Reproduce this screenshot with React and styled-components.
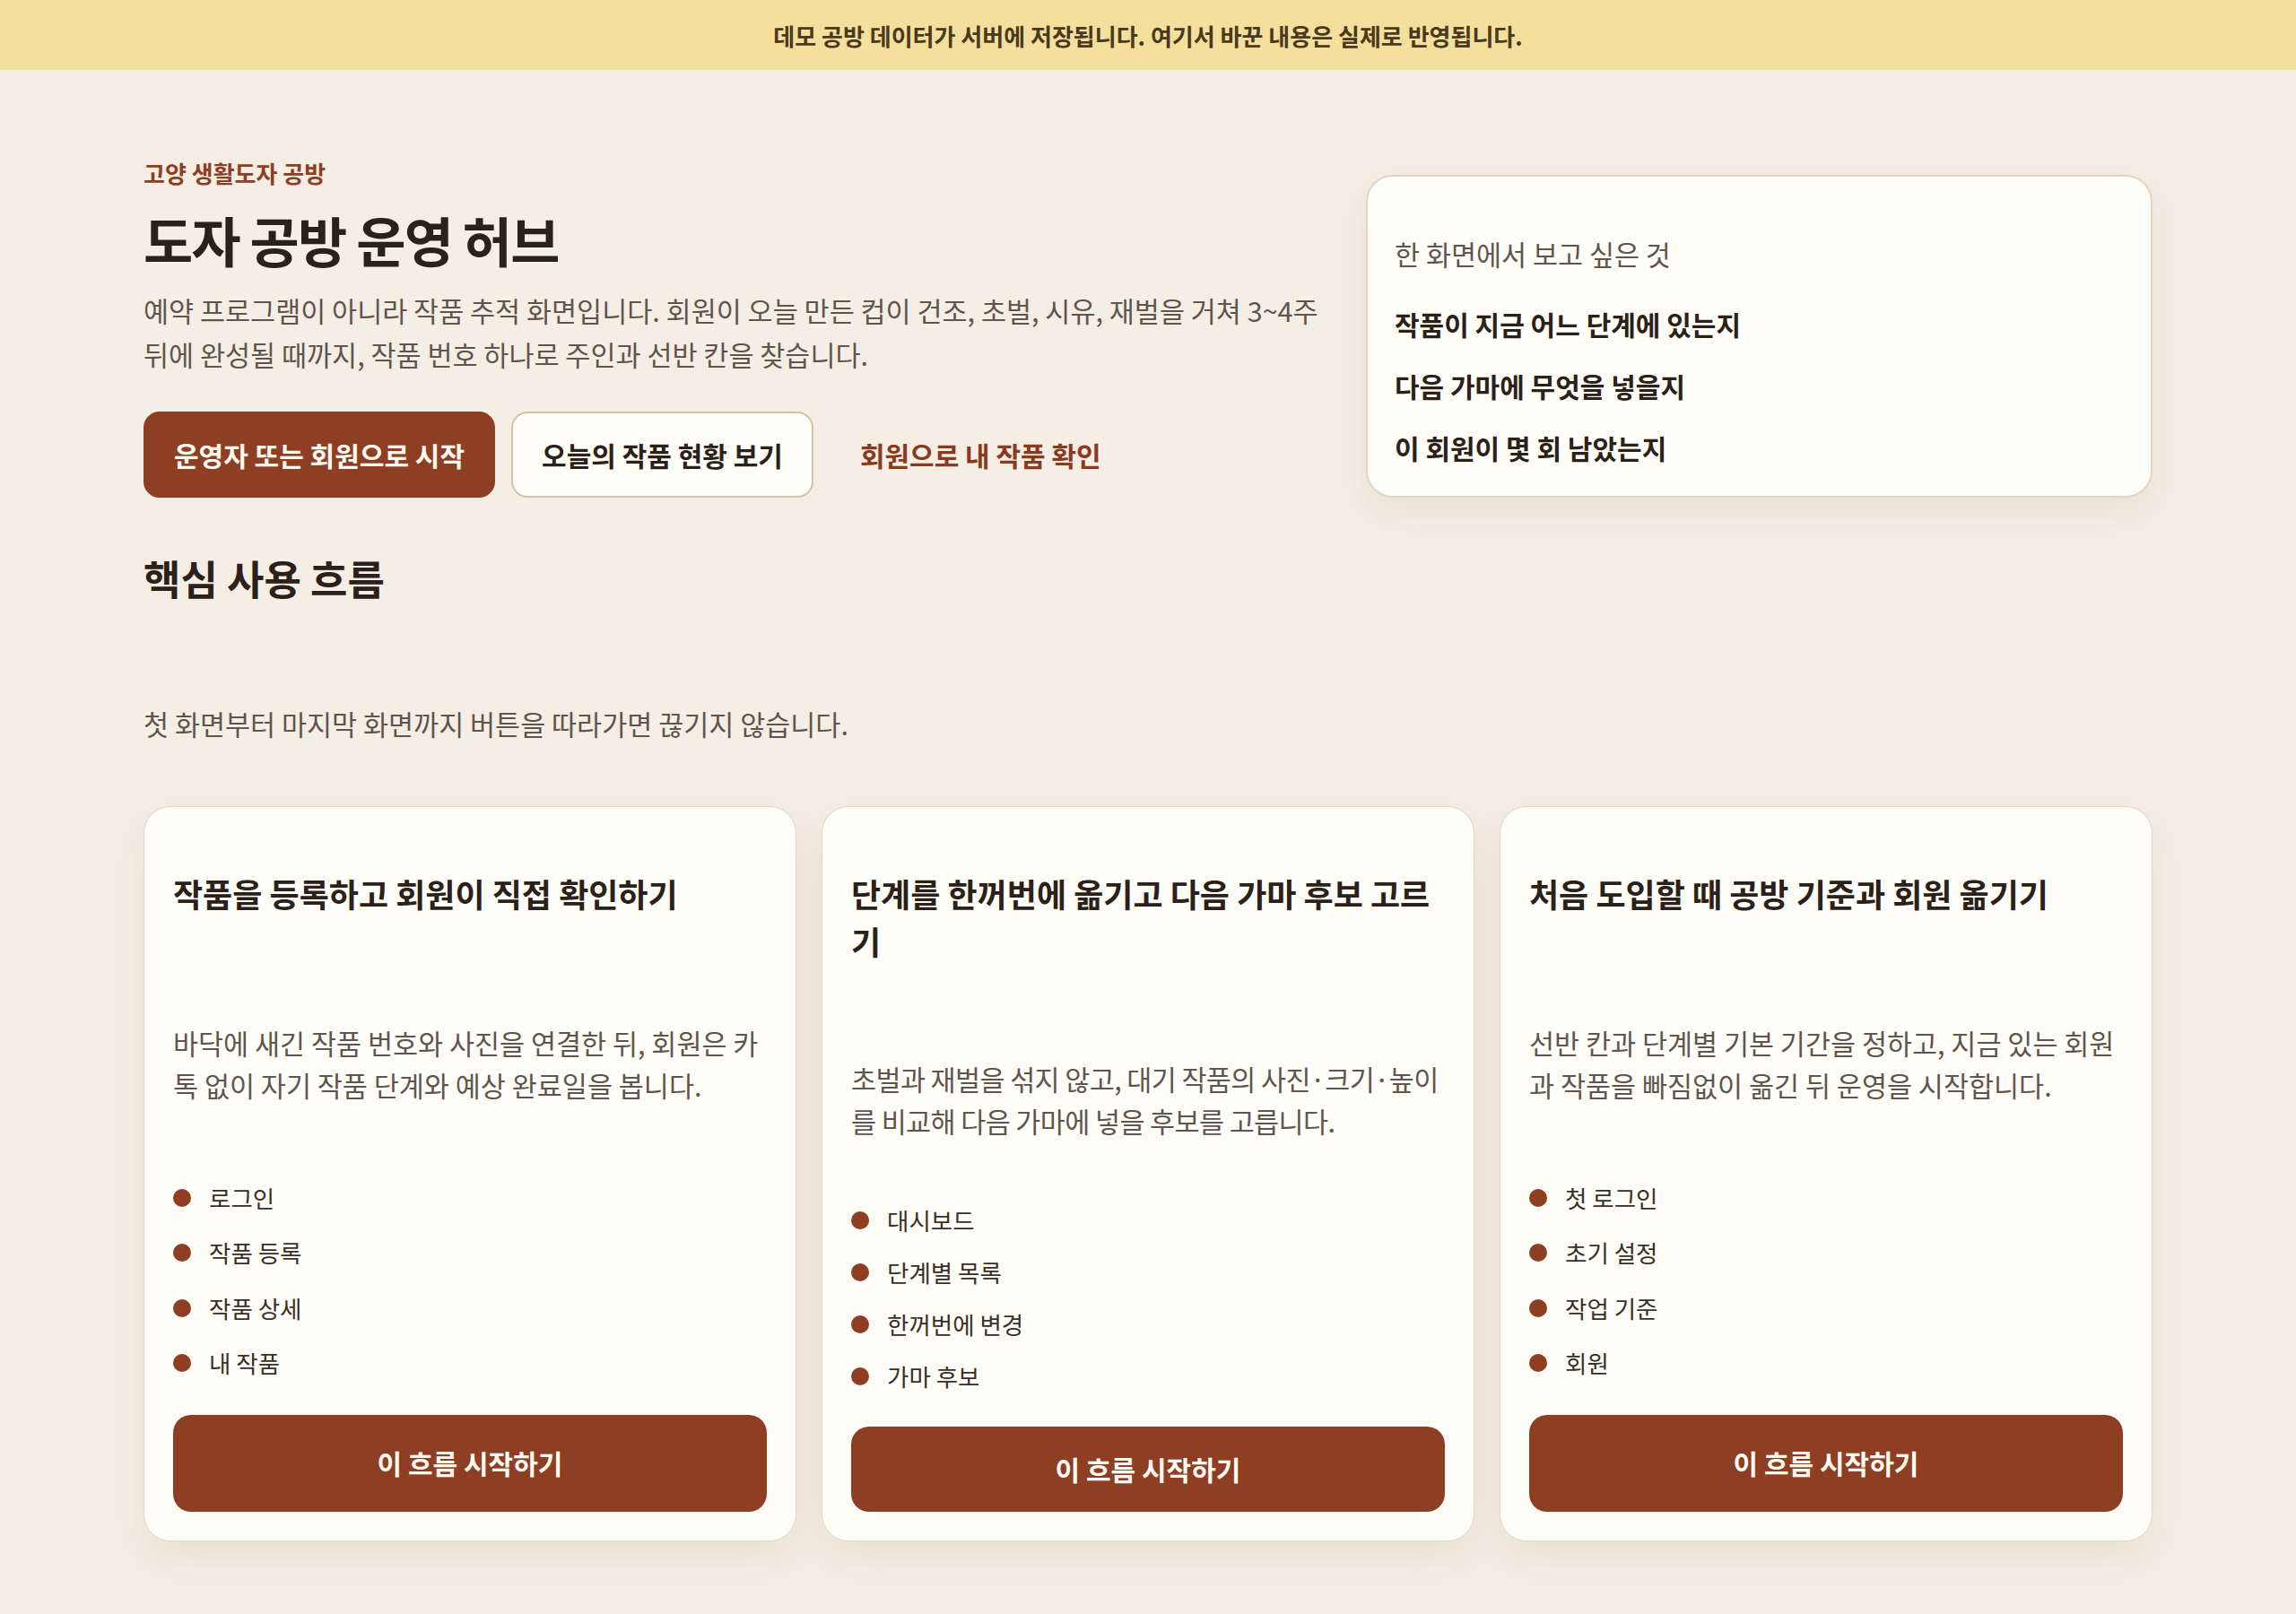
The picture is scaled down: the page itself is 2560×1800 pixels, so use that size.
import styled, { createGlobalStyle } from "styled-components";

const GlobalStyle = createGlobalStyle`
  * {
    box-sizing: border-box;
  }
  body {
    margin: 0;
    background: #f5eee5;
    color: #2b2119;
    font-family: "Noto Sans CJK KR", "Noto Sans", sans-serif;
  }
`;

const Banner = styled.div`
  height: 78px;
  display: flex;
  align-items: center;
  justify-content: center;
  background: #f4df9c;
  color: #4a3a1d;
  font-size: 26px;
  font-weight: 700;
`;

const Page = styled.main`
  padding: 98px 160px 80px;
`;

const Hero = styled.section`
  display: grid;
  grid-template-columns: minmax(0, 1fr) 877px;
  column-gap: 24px;
  align-items: end;
`;

const HeroText = styled.div`
  display: flex;
  flex-direction: column;
`;

const Eyebrow = styled.p`
  margin: 0;
  font-size: 26px;
  line-height: 34px;
  font-weight: 700;
  color: #8e3e22;
`;

const Title = styled.h1`
  margin: 21px 0 0;
  font-size: 60px;
  line-height: 72px;
  font-weight: 700;
  letter-spacing: -0.03em;
  color: #2b2119;
`;

const Lead = styled.p`
  margin: 19px 0 0;
  font-size: 30.5px;
  line-height: 49px;
  color: #5f554d;
`;

const ButtonRow = styled.div`
  display: flex;
  gap: 18px;
  margin-top: 39px;
`;

const looks = {
  primary: "background: #8e3e22; color: #fffaf2; border-color: #8e3e22;",
  secondary: "background: #fffdf8; color: #2b2119; border-color: #d6c2a4;",
  ghost: "background: transparent; color: #8a3a1e; border-color: transparent;"
};

const HeroButton = styled.button`
  padding: 22px 32px;
  border: 2px solid;
  border-radius: 18px;
  font-family: inherit;
  font-size: 30px;
  line-height: 48px;
  font-weight: 700;
  cursor: pointer;
  ${props => looks[props.$look]}
`;

const NoteCard = styled.aside`
  background: #fffdf8;
  border: 2px solid #e3d5c1;
  border-radius: 30px;
  padding: 64px 30px 31px;
  box-shadow: 0 16px 40px rgba(96, 62, 30, 0.07);
`;

const NoteLabel = styled.p`
  margin: 0;
  font-size: 30.5px;
  line-height: 45px;
  color: #5f554d;
`;

const NoteList = styled.ul`
  list-style: none;
  margin: 33px 0 0;
  padding: 0;
  display: grid;
  gap: 24px;
`;

const NoteItem = styled.li`
  font-size: 30px;
  line-height: 45px;
  font-weight: 700;
  color: #2b2119;
`;

const SectionTitle = styled.h2`
  margin: 61px 0 0;
  font-size: 45px;
  line-height: 58px;
  font-weight: 700;
  color: #2b2119;
`;

const SectionLead = styled.p`
  margin: 109px 0 0;
  font-size: 30.5px;
  line-height: 48px;
  color: #5f554d;
`;

const FlowGrid = styled.div`
  display: grid;
  grid-template-columns: repeat(3, minmax(0, 1fr));
  gap: 28px;
  margin-top: 68px;
`;

const FlowCard = styled.article`
  display: grid;
  background: #fffdf8;
  border: 1px solid #e2d5c2;
  border-radius: 30px;
  padding: 32px;
  box-shadow: 0 18px 44px rgba(96, 62, 30, 0.08);
`;

const FlowTitle = styled.h3`
  margin: 38px 0 0;
  font-size: 36px;
  line-height: 53px;
  font-weight: 700;
  color: #2b2119;
`;

const FlowText = styled.p`
  margin: 104px 0 0;
  font-size: 30.5px;
  line-height: 47px;
  letter-spacing: ${props => (props.$tight ? "-0.02em" : "0")};
  color: #5f554d;
`;

const StepList = styled.ul`
  list-style: none;
  margin: 68px 0 0;
  padding: 0;
  display: grid;
  gap: 20px;
`;

const Step = styled.li`
  display: flex;
  align-items: center;
  gap: 20px;
  font-size: 26.5px;
  line-height: 38px;
  color: #3a2f27;

  &::before {
    content: "";
    width: 20px;
    height: 20px;
    border-radius: 50%;
    background: #8e3e22;
    flex-shrink: 0;
  }
`;

const FlowButton = styled.button`
  margin-top: 37px;
  display: flex;
  align-items: center;
  justify-content: center;
  width: 100%;
  padding: 25px 24px;
  border: none;
  border-radius: 20px;
  background: #8e3e22;
  color: #fffaf2;
  font-family: inherit;
  font-size: 30px;
  line-height: 45px;
  font-weight: 700;
  cursor: pointer;
`;

// tight: the middle dots in this text run wider in our font than in the design
const flows = [
  {
    title: "작품을 등록하고 회원이 직접 확인하기",
    text: "바닥에 새긴 작품 번호와 사진을 연결한 뒤, 회원은 카톡 없이 자기 작품 단계와 예상 완료일을 봅니다.",
    steps: ["로그인", "작품 등록", "작품 상세", "내 작품"]
  },
  {
    title: "단계를 한꺼번에 옮기고 다음 가마 후보 고르기",
    text: "초벌과 재벌을 섞지 않고, 대기 작품의 사진·크기·높이를 비교해 다음 가마에 넣을 후보를 고릅니다.",
    steps: ["대시보드", "단계별 목록", "한꺼번에 변경", "가마 후보"],
    tight: true
  },
  {
    title: "처음 도입할 때 공방 기준과 회원 옮기기",
    text: "선반 칸과 단계별 기본 기간을 정하고, 지금 있는 회원과 작품을 빠짐없이 옮긴 뒤 운영을 시작합니다.",
    steps: ["첫 로그인", "초기 설정", "작업 기준", "회원"]
  }
];

const App = () => (
  <>
    <GlobalStyle />
    <Banner>데모 공방 데이터가 서버에 저장됩니다. 여기서 바꾼 내용은 실제로 반영됩니다.</Banner>
    <Page>
      <Hero>
        <HeroText>
          <Eyebrow>고양 생활도자 공방</Eyebrow>
          <Title>도자 공방 운영 허브</Title>
          <Lead>
            예약 프로그램이 아니라 작품 추적 화면입니다. 회원이 오늘 만든 컵이 건조, 초벌, 시유, 재벌을 거쳐
            3~4주 뒤에 완성될 때까지, 작품 번호 하나로 주인과 선반 칸을 찾습니다.
          </Lead>
          <ButtonRow>
            <HeroButton $look="primary">운영자 또는 회원으로 시작</HeroButton>
            <HeroButton $look="secondary">오늘의 작품 현황 보기</HeroButton>
            <HeroButton $look="ghost">회원으로 내 작품 확인</HeroButton>
          </ButtonRow>
        </HeroText>
        <NoteCard>
          <NoteLabel>한 화면에서 보고 싶은 것</NoteLabel>
          <NoteList>
            <NoteItem>작품이 지금 어느 단계에 있는지</NoteItem>
            <NoteItem>다음 가마에 무엇을 넣을지</NoteItem>
            <NoteItem>이 회원이 몇 회 남았는지</NoteItem>
          </NoteList>
        </NoteCard>
      </Hero>

      <SectionTitle>핵심 사용 흐름</SectionTitle>
      <SectionLead>첫 화면부터 마지막 화면까지 버튼을 따라가면 끊기지 않습니다.</SectionLead>

      <FlowGrid>
        {flows.map(flow => (
          <FlowCard key={flow.title}>
            <FlowTitle>{flow.title}</FlowTitle>
            <FlowText $tight={flow.tight}>{flow.text}</FlowText>
            <StepList>
              {flow.steps.map(step => (
                <Step key={step}>{step}</Step>
              ))}
            </StepList>
            <FlowButton>이 흐름 시작하기</FlowButton>
          </FlowCard>
        ))}
      </FlowGrid>
    </Page>
  </>
);

export default App;
